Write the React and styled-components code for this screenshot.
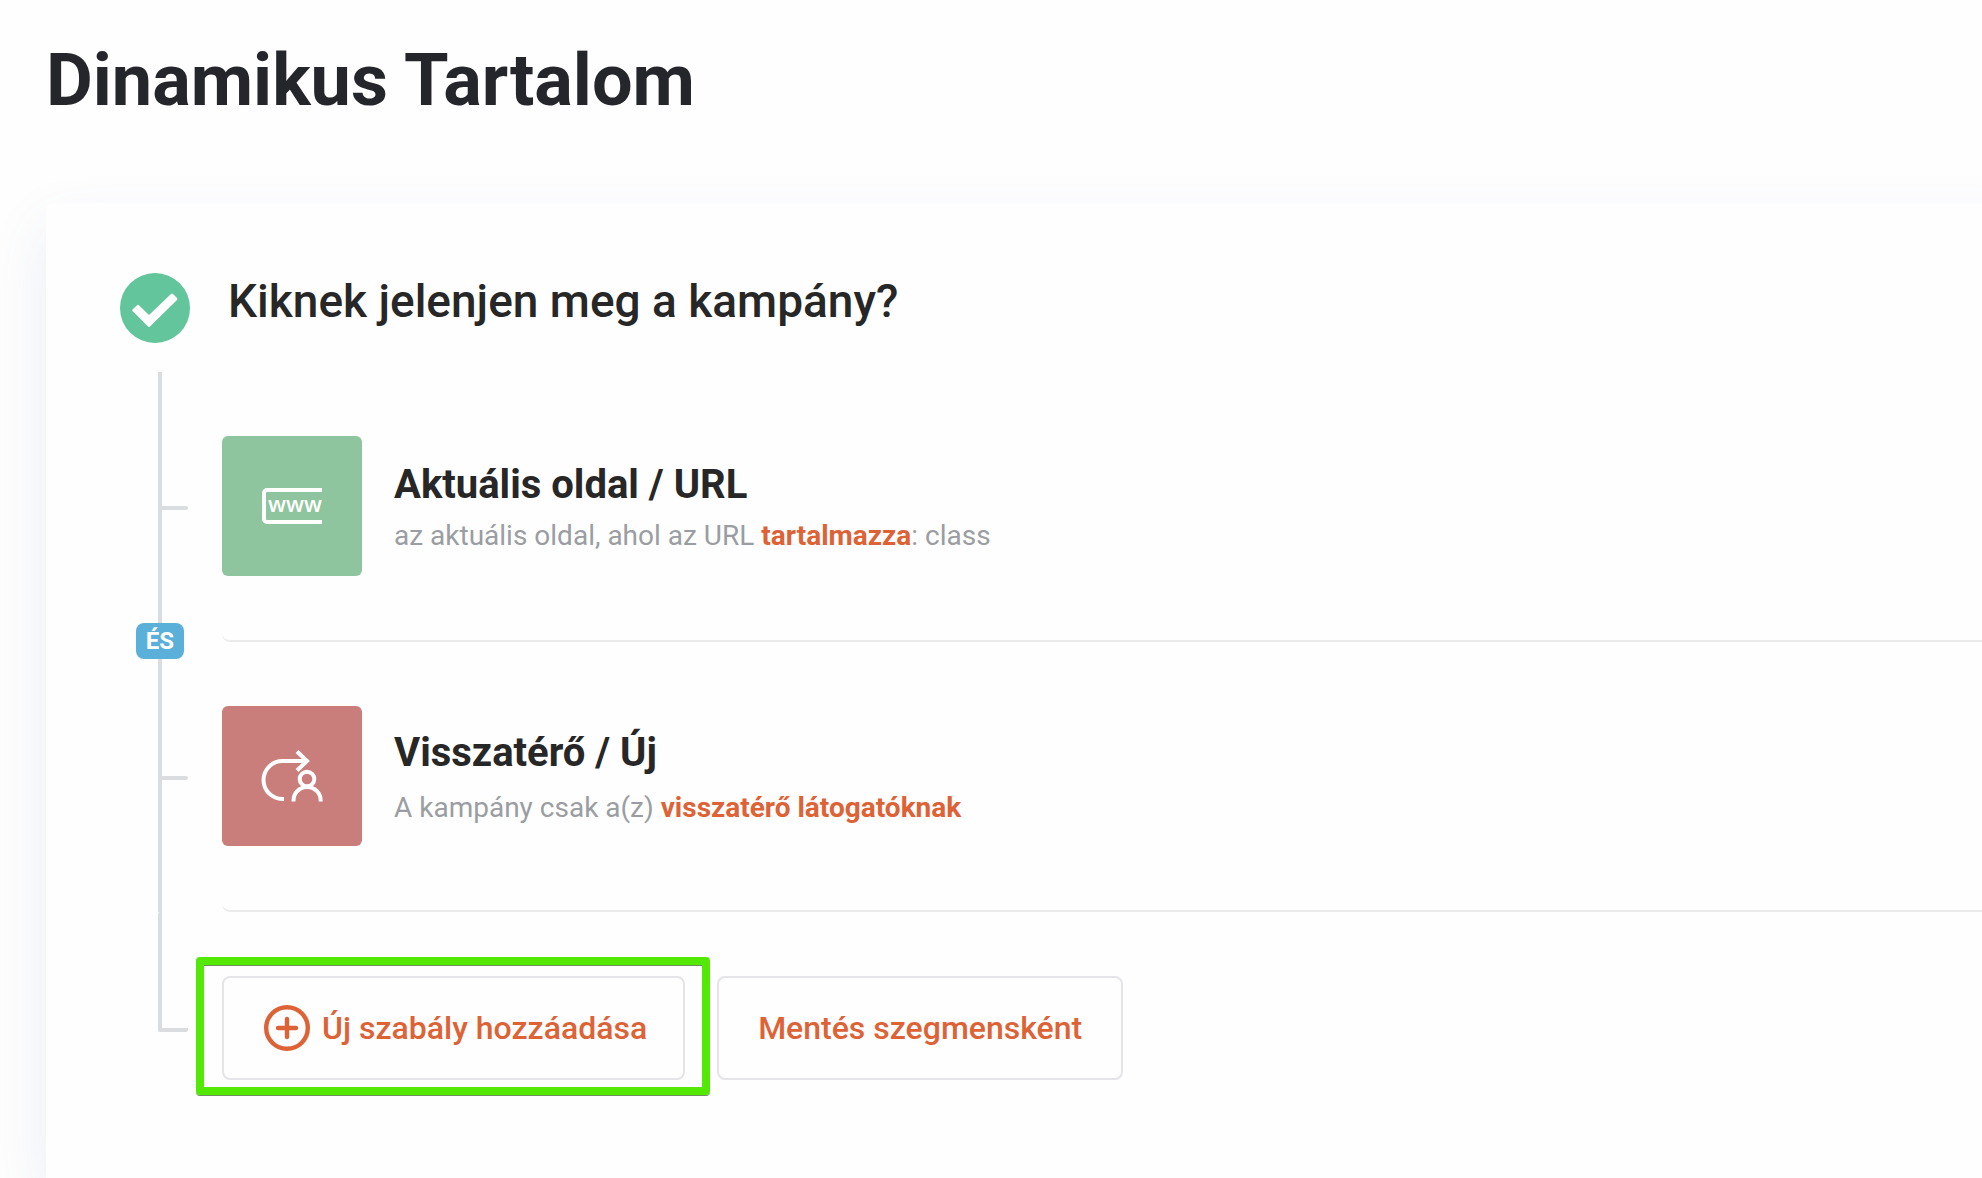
import React from "react";
import styled, { createGlobalStyle } from "styled-components";

const color = {
  ink: "#25262b",
  text: "#272727",
  muted: "#9a9da2",
  accent: "#dd6337",
  line: "#dadde0",
  divider: "#ebebeb",
  buttonBorder: "#e4e4e9",
  done: "#62c59b",
  badge: "#5bb0d9",
  highlight: "#54e805",
};

const GlobalStyle = createGlobalStyle`
  *, *::before, *::after { box-sizing: border-box; }
  body {
    margin: 0;
    background: #fefefe;
    color: ${color.text};
    font-family: Roboto, "Liberation Sans", sans-serif;
  }
  h1, h2, h3, p, ul { margin: 0; padding: 0; }
`;

const Page = styled.main`
  display: flex;
  flex-direction: column;
  min-height: 100vh;
  padding-left: 46px;
  overflow: hidden;
`;

const PageTitle = styled.h1`
  padding: 39px 0 80px;
  color: ${color.ink};
  font-size: 72px;
  font-weight: 700;
  line-height: 84px;
`;

const Card = styled.section`
  flex: 1;
  margin-right: -64px;
  padding: 70px 0 64px 74px;
  background: #fefefe;
  border-radius: 6px 0 0 0;
  box-shadow: 0 24px 60px rgba(80, 100, 180, 0.11);
`;

const CardHeader = styled.header`
  display: flex;
  align-items: flex-start;
  gap: 38px;
  height: 99px;
`;

const CardTitle = styled.h2`
  font-size: 46px;
  font-weight: 500;
  line-height: 56px;
`;

const Timeline = styled.div`
  padding-left: 38px;
`;

const RuleList = styled.ul`
  list-style: none;
`;

const Step = styled.li`
  display: flex;
`;

const Rail = styled.div`
  position: relative;
  flex: none;
  width: 64px;
  border-left: 4px solid ${color.line};
`;

const LastRail = styled(Rail)`
  height: 120px;
  border-bottom: 4px solid ${color.line};
  border-radius: 2px;
  width: 30px;
  margin-right: 34px;
`;

const Branch = styled.span`
  position: absolute;
  top: 134px;
  left: -4px;
  width: 30px;
  height: 4px;
  border-radius: 2px;
  background: ${color.line};
`;

const Operator = styled.span`
  position: absolute;
  z-index: 1;
  bottom: -17px;
  left: -26px;
  width: 48px;
  height: 36px;
  border-radius: 8px;
  background: ${color.badge};
  color: #fff;
  font-size: 24px;
  font-weight: 700;
  line-height: 36px;
  text-align: center;
`;

const Rule = styled.div`
  display: flex;
  flex: 1;
  align-items: center;
  gap: 32px;
  padding: 64px 0;
  border-bottom: 2px solid ${color.divider};
  border-radius: 0 0 0 8px;
`;

const Tile = styled.div`
  display: grid;
  flex: none;
  place-items: center;
  width: 140px;
  height: 140px;
  border-radius: 6px;
  background: ${(p) => p.$color};
`;

const RuleText = styled.div`
  display: flex;
  flex-direction: column;
  gap: ${(p) => p.$gap}px;
  padding-top: 4px;
`;

const RuleTitle = styled.h3`
  font-size: 40px;
  font-weight: 700;
  line-height: 56px;
`;

const RuleSummary = styled.p`
  color: ${color.muted};
  font-size: 28px;
  line-height: 46px;

  strong {
    color: ${color.accent};
    font-weight: 700;
  }
`;

const LastStep = styled.div`
  display: flex;
`;

const Actions = styled.div`
  display: flex;
  gap: 32px;
  padding-top: 64px;
`;

const Highlighted = styled.div`
  position: relative;

  &::after {
    content: "";
    position: absolute;
    inset: -19px -25px -15px -26px;
    border: 8px solid ${color.highlight};
    border-radius: 4px;
    box-shadow: 0 1px 0 #6d8f5c, inset 0 1px 0 #6d8f5c;
    pointer-events: none;
  }
`;

const Button = styled.button`
  display: flex;
  align-items: center;
  gap: 12px;
  height: 104px;
  padding: ${(p) => (p.$withIcon ? "0 36px 0 40px" : "0 39px")};
  border: 2px solid ${color.buttonBorder};
  border-radius: 8px;
  background: #fefefe;
  color: ${color.accent};
  font: 500 32px/40px Roboto, "Liberation Sans", sans-serif;
  white-space: nowrap;
  cursor: pointer;
`;

const CheckIcon = () => (
  <svg width="70" height="70" viewBox="0 0 70 70" aria-hidden="true">
    <circle cx="35" cy="35" r="35" fill={color.done} />
    <path
      d="M13 36 17.300 32Q18 31.500 18.700 32L29 42 51 21Q52 20 53 21L57 25Q57.800 26 57 27L30 53.500Q29 54.500 28 53.500L12.500 38Q11.700 37 13 36Z"
      fill="#fff"
    />
  </svg>
);

const UrlIcon = () => (
  <svg width="62" height="36" viewBox="0 0 62 36" aria-hidden="true">
    <path d="M61 2H6a3 3 0 0 0-3 3v26a3 3 0 0 0 3 3h55" fill="none" stroke="#fff" strokeWidth="4" />
    <text x="7" y="24" fill="#fff" fontFamily='"Open Sans", sans-serif' fontSize="22" fontWeight="600">
      www
    </text>
  </svg>
);

const ReturningIcon = () => (
  <svg width="64" height="52" viewBox="0 0 64 52" fill="none" stroke="#fff" strokeWidth="4" aria-hidden="true">
    <path d="M24 49h-1.500a19 19 0 0 1 0-38H47" />
    <path d="M37 1.500 47 11 37 20.500" />
    <circle cx="47" cy="29" r="7.300" />
    <path d="M33.500 51.500v-1a13.600 13.600 0 0 1 27.200 0v1" />
  </svg>
);

const PlusIcon = () => (
  <svg
    width="46"
    height="46"
    viewBox="0 0 46 46"
    fill="none"
    stroke="currentColor"
    strokeWidth="4.400"
    strokeLinecap="round"
    aria-hidden="true"
  >
    <circle cx="23" cy="23" r="20.800" />
    <path d="M23 14v18M14 23h18" />
  </svg>
);

export default function App() {
  return (
    <>
      <GlobalStyle />
      <Page>
        <PageTitle>Dinamikus Tartalom</PageTitle>
        <Card>
          <CardHeader>
            <CheckIcon />
            <CardTitle>Kiknek jelenjen meg a kampány?</CardTitle>
          </CardHeader>
          <Timeline>
            <RuleList>
              <Step>
                <Rail>
                  <Branch />
                  <Operator>ÉS</Operator>
                </Rail>
                <Rule>
                  <Tile $color="#8fc59e">
                    <UrlIcon />
                  </Tile>
                  <RuleText $gap={0}>
                    <RuleTitle>Aktuális oldal / URL</RuleTitle>
                    <RuleSummary>
                      az aktuális oldal, ahol az URL <strong>tartalmazza</strong>: class
                    </RuleSummary>
                  </RuleText>
                </Rule>
              </Step>
              <Step>
                <Rail>
                  <Branch />
                </Rail>
                <Rule>
                  <Tile $color="#ca7e7c">
                    <ReturningIcon />
                  </Tile>
                  <RuleText $gap={4}>
                    <RuleTitle>Visszatérő / Új</RuleTitle>
                    <RuleSummary>
                      A kampány csak a(z) <strong>visszatérő látogatóknak</strong>
                    </RuleSummary>
                  </RuleText>
                </Rule>
              </Step>
            </RuleList>
            <LastStep>
              <LastRail />
              <Actions>
                <Highlighted>
                  <Button type="button" $withIcon>
                    <PlusIcon />
                    Új szabály hozzáadása
                  </Button>
                </Highlighted>
                <Button type="button">Mentés szegmensként</Button>
              </Actions>
            </LastStep>
          </Timeline>
        </Card>
      </Page>
    </>
  );
}
